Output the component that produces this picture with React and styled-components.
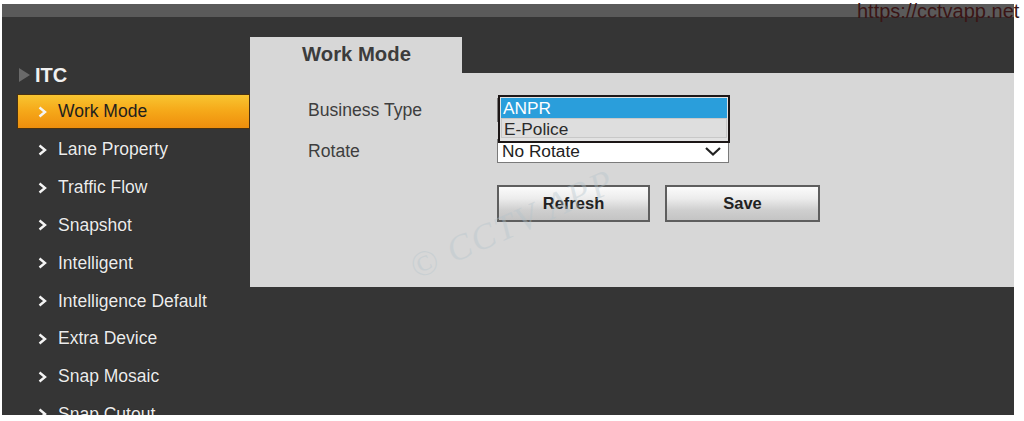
import React from "react";
import styled, { createGlobalStyle } from "styled-components";

const Global = createGlobalStyle`
  html, body { margin: 0; padding: 0; background: #ffffff; }
  body { font-family: "Liberation Sans", Arial, sans-serif; }
  * { box-sizing: border-box; }
`;

const Page = styled.div`
  position: relative;
  width: 1024px;
  height: 421px;
  padding: 4px 10px 6px 2px;
  overflow: hidden;
`;

const Frame = styled.div`
  display: flex;
  flex-direction: column;
  height: 411px;
  background: #353535;
`;

const TopBar = styled.div`
  height: 13px;
  background: #5a5a5a;
`;

const Main = styled.div`
  flex: 1;
  display: flex;
  overflow: hidden;
`;

const Sidebar = styled.nav`
  width: 248px;
  padding: 46px 0 0 13px;
  display: flex;
  flex-direction: column;
`;

const Header = styled.div`
  flex-shrink: 0;
  display: flex;
  align-items: center;
  height: 24px;
  padding-left: 4px;
  gap: 5px;
  color: #f0f0f0;
  font-size: 20px;
  font-weight: bold;
  margin-bottom: 7px;
`;

const Tri = styled.span`
  width: 0;
  height: 0;
  border-top: 7px solid transparent;
  border-bottom: 7px solid transparent;
  border-left: 11px solid #6a6a6a;
`;

const Item = styled.div`
  flex-shrink: 0;
  display: flex;
  align-items: center;
  gap: 11px;
  padding-left: 23px;
  height: ${(p) => (p.$active ? "35px" : "37.8px")};
  font-size: 17.5px;
  color: ${(p) => (p.$active ? "#1e1e1e" : "#ececec")};
  white-space: nowrap;
  ${(p) =>
    p.$active
      ? `
    background: linear-gradient(#f8c531 0%, #f6aa1a 45%, #ee8e0c 100%);
    border: 1px solid #4a3212;
    margin-left: 2px;
    margin-bottom: 2px;
    padding-left: 20px;
  `
      : `text-shadow: 0 0 1px rgba(0,0,0,0.6);`}
`;

const Chev = () => (
  <svg width="9" height="12" viewBox="0 0 9 12">
    <path d="M1.5 1.5 L7 6 L1.5 10.5" fill="none" stroke="#f4f4f4" strokeWidth="2.4" />
  </svg>
);

const Content = styled.section`
  flex: 1;
  display: flex;
  flex-direction: column;
  padding-top: 20px;
`;

const Tab = styled.div`
  width: 212px;
  height: 36px;
  background: #d7d7d7;
  color: #3c3c3c;
  font-size: 20.3px;
  font-weight: bold;
  padding: 6px 0 0 52px;
`;

const Panel = styled.div`
  position: relative;
  height: 214px;
  background: #d7d7d7;
  padding: 25px 0 0 58px;
`;

const Row = styled.div`
  display: grid;
  grid-template-columns: 189px 232px;
  align-items: center;
  height: 24px;
  margin-bottom: ${(p) => p.$mb || 0}px;
`;

const Label = styled.div`
  color: #3e3e3e;
  font-size: 17.6px;
`;

const SelectBox = styled.div`
  position: relative;
  height: 24px;
  background: #ffffff;
  border: 1px solid #7a7a7a;
  display: flex;
  align-items: center;
  justify-content: space-between;
  padding: 0 6px 0 4px;
  font-size: 17.3px;
  color: #222;
`;

const DropList = styled.div`
  position: absolute;
  top: -4px;
  left: 0;
  width: 232px;
  height: 48px;
  background: #e2e2e2;
  border: 2px solid #1c1616;
  padding: 1px;
  z-index: 2;
`;

const Option = styled.div`
  height: 20px;
  line-height: 20px;
  padding-left: 2px;
  font-size: 17.3px;
  color: ${(p) => (p.$sel ? "#ffffff" : "#2a2a2a")};
  background: ${(p) => (p.$sel ? "#2a9edb" : "#dedede")};
  border: ${(p) => (p.$sel ? "none" : "1px solid #c8c8c8")};
`;

const Buttons = styled.div`
  display: flex;
  gap: 15px;
  margin-left: 189px;
`;

const Button = styled.button`
  width: ${(p) => p.$w}px;
  height: 37px;
  font-family: "Liberation Sans", Arial, sans-serif;
  font-size: 16.5px;
  font-weight: bold;
  color: #222;
  border: 2px solid #5e5e5e;
  background: linear-gradient(#fbfbfb 0%, #ececec 35%, #cfcfcf 70%, #c4c4c4 100%);
  padding: 0;
`;

const Watermark = styled.div`
  position: absolute;
  left: 152px;
  top: 130px;
  transform: rotate(-24deg);
  font-family: "Liberation Serif", serif;
  font-style: italic;
  font-size: 36px;
  color: rgba(180, 196, 204, 0.38);
  letter-spacing: 2px;
  pointer-events: none;
  white-space: nowrap;
`;

const Url = styled.div`
  position: absolute;
  left: 857px;
  top: 0;
  font-size: 20px;
  line-height: 22px;
  color: #3a1515;
  white-space: nowrap;
`;

const items = [
  "Lane Property",
  "Traffic Flow",
  "Snapshot",
  "Intelligent",
  "Intelligence Default",
  "Extra Device",
  "Snap Mosaic",
  "Snap Cutout",
];

export default function App() {
  return (
    <Page>
      <Global />
      <Frame>
        <TopBar />
        <Main>
          <Sidebar>
            <Header>
              <Tri />
              ITC
            </Header>
            <Item $active>
              <Chev />
              Work Mode
            </Item>
            {items.map((t) => (
              <Item key={t}>
                <Chev />
                {t}
              </Item>
            ))}
          </Sidebar>
          <Content>
            <Tab>Work Mode</Tab>
            <Panel>
              <Row $mb={17}>
                <Label>Business Type</Label>
                <SelectBox>
                  ANPR
                  <DropList>
                    <Option $sel>ANPR</Option>
                    <Option>E-Police</Option>
                  </DropList>
                </SelectBox>
              </Row>
              <Row $mb={22}>
                <Label>Rotate</Label>
                <SelectBox>
                  No Rotate
                  <svg width="18" height="11" viewBox="0 0 18 11">
                    <path d="M2 2 L9 8.5 L16 2" fill="none" stroke="#222" strokeWidth="2.2" />
                  </svg>
                </SelectBox>
              </Row>
              <Buttons>
                <Button $w={153}>Refresh</Button>
                <Button $w={155}>Save</Button>
              </Buttons>
              <Watermark>© CCTV APP</Watermark>
            </Panel>
          </Content>
        </Main>
      </Frame>
      <Url>https://cctvapp.net</Url>
    </Page>
  );
}
